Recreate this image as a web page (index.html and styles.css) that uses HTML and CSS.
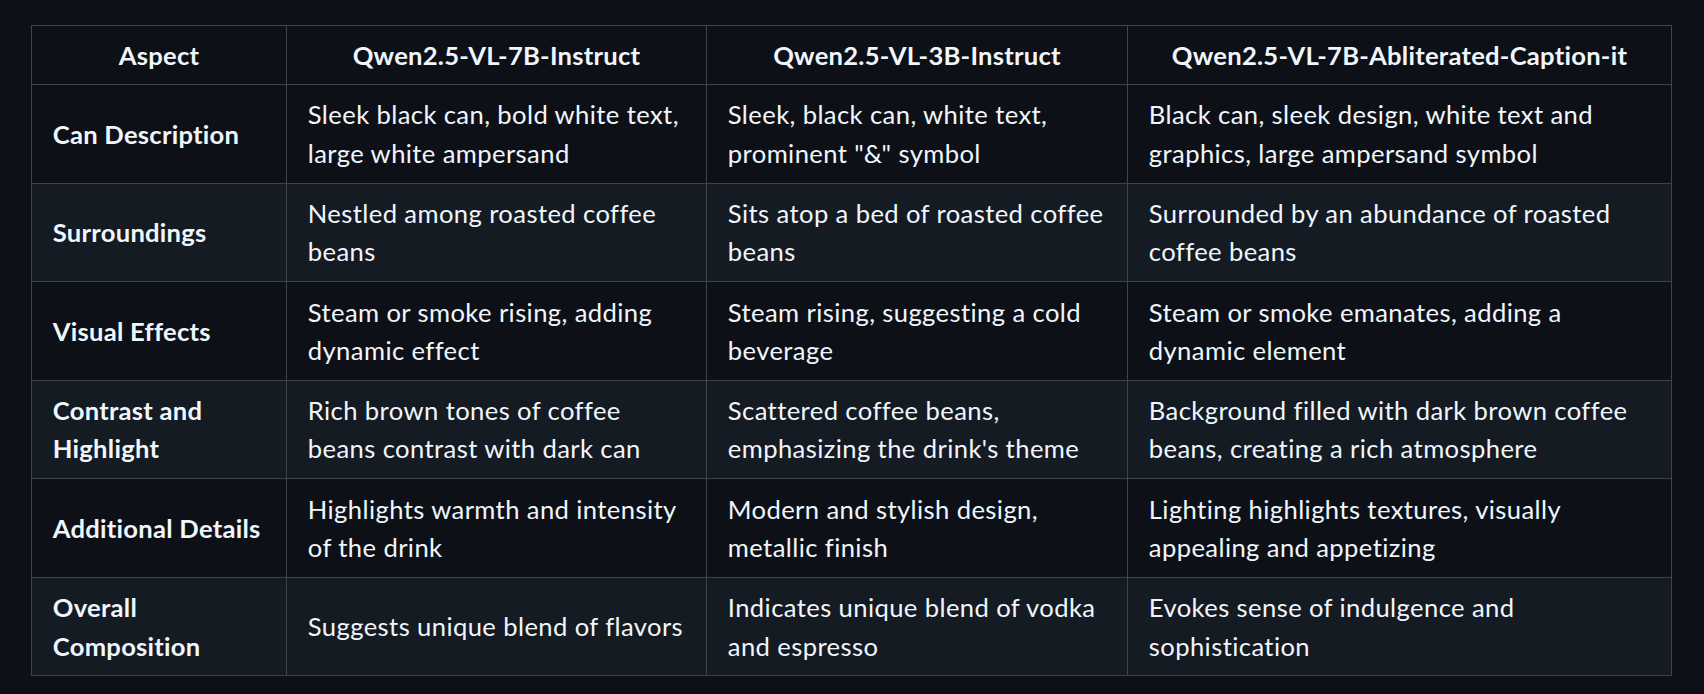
FILE: index.html
```html
<!DOCTYPE html>
<html lang="en">
<head>
<meta charset="utf-8">
<title>Model comparison</title>
<link rel="stylesheet" href="styles.css">
</head>
<body>
<div class="page">
  <table class="compare">
    <colgroup>
      <col class="c1"><col class="c2"><col class="c3"><col class="c4">
    </colgroup>
    <thead>
      <tr>
        <th>Aspect</th>
        <th>Qwen2.5-VL-7B-Instruct</th>
        <th>Qwen2.5-VL-3B-Instruct</th>
        <th>Qwen2.5-VL-7B-Abliterated-Caption-it</th>
      </tr>
    </thead>
    <tbody>
      <tr>
        <td class="aspect">Can Description</td>
        <td>Sleek black can, bold white text, large white ampersand</td>
        <td>Sleek, black can, white text, prominent "&amp;" symbol</td>
        <td>Black can, sleek design, white text and graphics, large ampersand symbol</td>
      </tr>
      <tr>
        <td class="aspect">Surroundings</td>
        <td>Nestled among roasted coffee beans</td>
        <td>Sits atop a bed of roasted coffee beans</td>
        <td>Surrounded by an abundance of roasted coffee beans</td>
      </tr>
      <tr>
        <td class="aspect">Visual Effects</td>
        <td>Steam or smoke rising, adding dynamic effect</td>
        <td>Steam rising, suggesting a cold beverage</td>
        <td>Steam or smoke emanates, adding a dynamic element</td>
      </tr>
      <tr>
        <td class="aspect">Contrast and Highlight</td>
        <td>Rich brown tones of coffee beans contrast with dark can</td>
        <td>Scattered coffee beans, emphasizing the drink's theme</td>
        <td>Background filled with dark brown coffee beans, creating a rich atmosphere</td>
      </tr>
      <tr>
        <td class="aspect">Additional Details</td>
        <td>Highlights warmth and intensity of the drink</td>
        <td>Modern and stylish design, metallic finish</td>
        <td>Lighting highlights textures, visually appealing and appetizing</td>
      </tr>
      <tr>
        <td class="aspect">Overall Composition</td>
        <td>Suggests unique blend of flavors</td>
        <td>Indicates unique blend of vodka and espresso</td>
        <td>Evokes sense of indulgence and sophistication</td>
      </tr>
    </tbody>
  </table>
</div>
</body>
</html>
```

FILE: styles.css
```css
html, body {
  margin: 0;
  padding: 0;
  background: #0d1117;
}

.page {
  padding: 25px 33px 0 31px;
  font-family: "Lato", "Open Sans", sans-serif;
  color: #f0f6fc;
  font-size: 25.6px;
  line-height: 1.5;
}

.compare {
  border-collapse: collapse;
  border-spacing: 0;
  table-layout: fixed;
  width: 1640px;
}

.c1 { width: 255px; }
.c2 { width: 420px; }
.c3 { width: 421px; }
.c4 { width: 544px; }

.compare th,
.compare td {
  border: 1.6px solid #3d444d;
  padding: 10.4px 20.8px 10.4px 20.8px;
  vertical-align: middle;
}

.compare th {
  font-weight: 700;
  text-align: center;
  letter-spacing: 0.25px;
  padding-top: 9.8px;
  padding-bottom: 9.8px;
}

.compare td {
  text-align: left;
  letter-spacing: 0.4px;
}

.compare td.aspect {
  font-weight: 700;
  letter-spacing: 0.25px;
}

.compare thead tr,
.compare tbody tr:nth-child(odd) {
  background: #0d1117;
}

.compare tbody tr:nth-child(even) {
  background: #151b23;
}
```
